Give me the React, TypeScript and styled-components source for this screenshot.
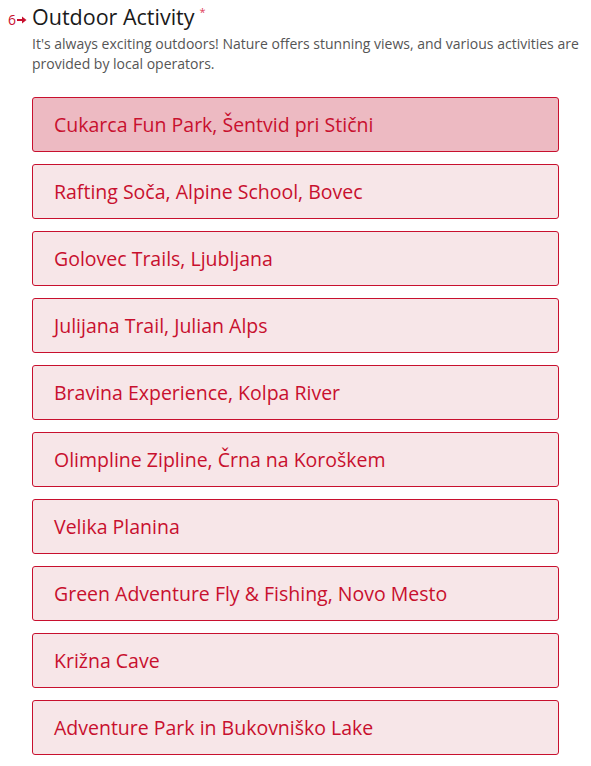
import React, { useState } from "react";
import styled, { createGlobalStyle } from "styled-components";

const options: string[] = [
  "Cukarca Fun Park, Šentvid pri Stični",
  "Rafting Soča, Alpine School, Bovec",
  "Golovec Trails, Ljubljana",
  "Julijana Trail, Julian Alps",
  "Bravina Experience, Kolpa River",
  "Olimpline Zipline, Črna na Koroškem",
  "Velika Planina",
  "Green Adventure Fly & Fishing, Novo Mesto",
  "Križna Cave",
  "Adventure Park in Bukovniško Lake",
];

const App: React.FC = () => {
  const [selected, setSelected] = useState<number>(0);

  return (
    <>
      <GlobalStyle />
      <Question>
        <Header>
          <Counter>
            6
            <svg width="10" height="8" viewBox="0 0 10 8">
              <path d="M0 4h6" stroke="#c8102e" strokeWidth="2" />
              <path d="M5 0.5L9.5 4L5 7.5z" fill="#c8102e" />
            </svg>
          </Counter>
          <Title>
            Outdoor Activity<Required>*</Required>
          </Title>
        </Header>
        <Description>
          It's always exciting outdoors! Nature offers stunning views, and various activities are
          provided by local operators.
        </Description>
        <OptionList>
          {options.map((label, i) => (
            <Option key={label} $active={selected === i} onClick={() => setSelected(i)}>
              {label}
            </Option>
          ))}
        </OptionList>
      </Question>
    </>
  );
};

const GlobalStyle = createGlobalStyle`
  body {
    margin: 0;
    background: #fff;
    font-family: "Open Sans", "Liberation Sans", sans-serif;
  }
`;

const Question = styled.div`
  padding: 4px 0 0 8px;
`;

const Header = styled.div`
  display: flex;
  align-items: baseline;
  height: 26px;
`;

const Counter = styled.span`
  width: 24px;
  display: flex;
  align-items: center;
  gap: 1px;
  color: #c8102e;
  font-size: 14px;
  svg {
    margin-top: 1px;
  }
`;

const Title = styled.h1`
  margin: 0;
  font-size: 21.5px;
  font-weight: 400;
  line-height: 26px;
  color: #1a1a1a;
`;

const Required = styled.span`
  position: relative;
  top: -9px;
  color: #e0405a;
  font-size: 11px;
  margin-left: 5px;
`;

const Description = styled.p`
  margin: 4px 0 0 24px;
  font-size: 14px;
  line-height: 20px;
  color: #555;
`;

const OptionList = styled.div`
  display: flex;
  flex-direction: column;
  gap: 12px;
  margin: 23px 32px 0 24px;
`;

const Option = styled.div<{ $active: boolean }>`
  box-sizing: border-box;
  height: 55px;
  display: flex;
  align-items: center;
  padding: 0 21px;
  border: 1px solid #c8102e;
  border-radius: 3px;
  background: ${(p) => (p.$active ? "#edbac2" : "#f7e6e8")};
  color: #c8102e;
  font-size: 19.5px;
  cursor: pointer;
`;

export default App;
